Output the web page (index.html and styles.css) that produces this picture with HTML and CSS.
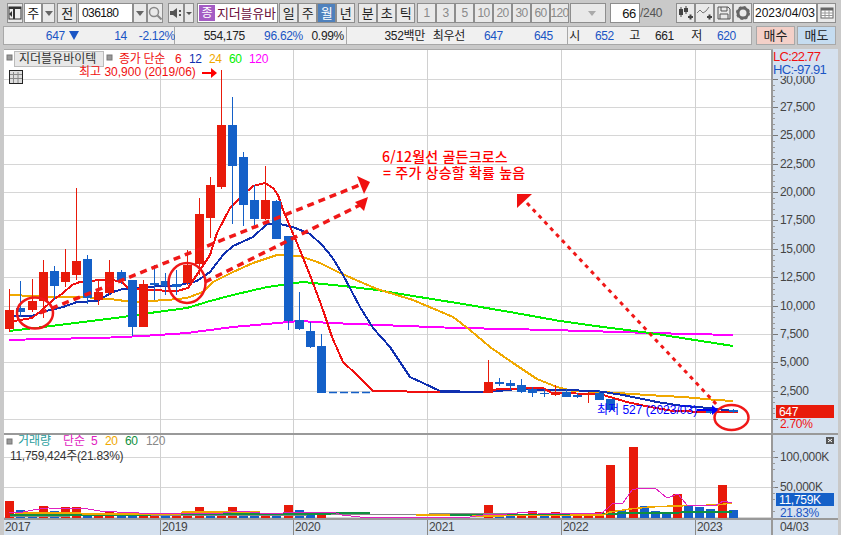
FILE: index.html
```html
<!DOCTYPE html>
<html lang="ko">

<head>
    <meta charset="UTF-8">
    <title>지더블유바이텍 월봉</title>
    <link rel="stylesheet" href="styles.css">
</head>

<body>
    <div class="toolbar">
        <div class="btn w16 m1">
            <svg width="14" height="14" viewBox="0 0 14 14"><rect x="1" y="1" width="12" height="12" fill="#eee" stroke="#333"/><rect x="1" y="1" width="12" height="2" fill="#333"/><rect x="5" y="3" width="2" height="10" fill="#333"/><path d="M1 8l3-3v6z" fill="#333"/></svg>
        </div>
        <div class="field w18 center">주</div>
        <div class="btn w13 m2"><i class="arrow"></i></div>
        <div class="btn w20 m1">전</div>
        <div class="field w55 left code">036180</div>
        <div class="btn w14"><i class="arrow"></i></div>
        <div class="btn w16 m5">
            <svg width="14" height="14" viewBox="0 0 14 14"><circle cx="6" cy="6" r="4.500" fill="none" stroke="#888" stroke-width="1.500"/><path d="M9.500 9.500l4 4" stroke="#888" stroke-width="2"/></svg>
        </div>
        <div class="btn w16">
            <svg width="14" height="14" viewBox="0 0 14 14"><path d="M1 5h3l4-3v10l-4-3H1z" fill="#555"/><rect x="10" y="4" width="2" height="2" fill="#555"/><rect x="10" y="8" width="2" height="2" fill="#555"/></svg>
        </div>
        <div class="btn w10 m3"><i class="arrow small"></i></div>
        <div class="name w81 m1">
            <span class="name-tag">종</span><span class="name-text">지더블유바</span>
        </div>
        <div class="btn w19">일</div>
        <div class="btn w19">주</div>
        <div class="btn w19 on">월</div>
        <div class="btn w19 m3">년</div>
        <div class="btn w19">분</div>
        <div class="btn w19">초</div>
        <div class="btn w19 m2">틱</div>
        <div class="btn w19 off">1</div>
        <div class="btn w19 off">3</div>
        <div class="btn w19 off">5</div>
        <div class="btn w19 off">10</div>
        <div class="btn w19 off">20</div>
        <div class="btn w19 off">30</div>
        <div class="btn w19 off">60</div>
        <div class="btn w19 off m1">120</div>
        <div class="btn w36 m4 end"><i class="arrow pale"></i></div>
        <div class="field w30 right">66</div>
        <div class="count m10">/240</div>
        <div class="btn w19">
            <svg width="16" height="14" viewBox="0 0 16 14"><path d="M3 1v10M8 0v8" stroke="#444"/><rect x="1" y="3" width="4" height="6" fill="#444"/><rect x="6" y="2" width="4" height="4" fill="#444"/><path d="M10 11h5M12.500 8.500v5" stroke="#444" stroke-width="2"/></svg>
        </div>
        <div class="btn w19">
            <svg width="16" height="14" viewBox="0 0 16 14"><path d="M0 7l3-3 3 3 3-2 3-4" fill="none" stroke="#777"/><path d="M10 11h5M12.500 8.500v5" stroke="#444" stroke-width="2"/></svg>
        </div>
        <div class="btn w19">
            <svg width="14" height="14" viewBox="0 0 14 14"><path d="M1 1h10l2 2v10H1z" fill="#e8e8e8" stroke="#555"/><path d="M4 1v4h6V1M3 13V8h8v5" fill="none" stroke="#555"/></svg>
        </div>
        <div class="btn w19 m1">
            <svg width="14" height="14" viewBox="0 0 14 14"><circle cx="7" cy="7" r="5" fill="none" stroke="#666" stroke-width="3"/><circle cx="7" cy="7" r="6" fill="none" stroke="#666" stroke-width="2" stroke-dasharray="2.400 2.300"/></svg>
        </div>
        <div class="field w64 center date">2023/04/03</div>
        <div class="btn w19">
            <svg width="14" height="12" viewBox="0 0 14 12"><rect x="1" y="1" width="12" height="10" fill="#fff" stroke="#666"/><rect x="1" y="1" width="12" height="2.500" fill="#666"/><path d="M5 3v8M9 3v8M1 6h12M1 8.500h12" stroke="#999"/></svg>
        </div>
    </div>

    <div class="quotebar">
        <div class="quote s172">
            <span class="q w75 blue">647 <i class="down"></i></span>
            <span class="q w48 blue">14</span>
            <span class="q w48 blue">-2.12%</span>
        </div>
        <div class="quote s172">
            <span class="q w70">554,175</span>
            <span class="q w58 blue">96.62%</span>
            <span class="q w41">0.99%</span>
        </div>
        <div class="quote s221">
            <span class="q w78">352백만</span>
            <span class="q w40">최우선</span>
            <span class="q w38 blue">647</span>
            <span class="q w50 blue">645</span>
        </div>
        <div class="quote s184">
            <span class="q w12">시</span>
            <span class="q w34 blue">652</span>
            <span class="q w26">고</span>
            <span class="q w34">661</span>
            <span class="q w28">저</span>
            <span class="q w34 blue">620</span>
        </div>
        <div class="trade buy">매수</div>
        <div class="trade sell">매도</div>
    </div>

    <div class="chart">
        <svg id="plot" width="841" height="486" viewBox="0 49 841 486">
            <rect x="4" y="49" width="834" height="486" fill="#fff"/>
            <rect x="772" y="49" width="66" height="486" class="axis-bg"/>
            <rect x="4" y="519" width="834" height="16" class="axis-bg"/>
            <g id="grid"></g>
            <g id="volume"></g>
            <g id="lines"></g>
            <g id="candles"></g>

            <path d="M329 392.500H372" class="flat"/>

            <text x="780" y="111" class="t axis">27,500</text>
            <text x="780" y="139" class="t axis">25,000</text>
            <text x="780" y="168" class="t axis">22,500</text>
            <text x="780" y="196" class="t axis">20,000</text>
            <text x="780" y="224" class="t axis">17,500</text>
            <text x="780" y="253" class="t axis">15,000</text>
            <text x="780" y="281" class="t axis">12,500</text>
            <text x="780" y="310" class="t axis">10,000</text>
            <text x="780" y="338" class="t axis">7,500</text>
            <text x="780" y="366" class="t axis">5,000</text>
            <text x="780" y="395" class="t axis">2,500</text>
            <text x="780" y="84" class="t axis">30,000</text>
            <rect x="773" y="49" width="65" height="27" class="axis-bg"/>
            <text x="773" y="61" class="t hl red">LC:22.77</text>
            <text x="773" y="74" class="t hl blue">HC:-97.91</text>

            <rect x="776" y="405" width="58" height="13" fill="#e81a0a"/>
            <text x="779" y="415.500" class="t" fill="#fff">647</text>
            <text x="780" y="428" class="t red">2.70%</text>

            <rect x="826" y="437" width="8" height="7" fill="#555"/>
            <path d="M828 439l4 3M832 439l-4 3" stroke="#fff"/>
            <text x="780" y="461" class="t axis">100,000K</text>
            <text x="780" y="491" class="t axis">50,000K</text>
            <rect x="776" y="493" width="58" height="13" fill="#1460c8"/>
            <text x="779" y="504" class="t" fill="#fff">11,759K</text>
            <text x="780" y="517" class="t blue">21.83%</text>

            <text x="5" y="531" class="t axis">2017</text>
            <text x="162" y="531" class="t axis">2019</text>
            <text x="295" y="531" class="t axis">2020</text>
            <text x="429" y="531" class="t axis">2021</text>
            <text x="563" y="531" class="t axis">2022</text>
            <text x="697" y="531" class="t axis">2023</text>
            <text x="780" y="531" class="t axis">04/03</text>

            <rect x="7" y="55" width="5" height="5" class="sq"/>
            <rect x="14.500" y="51.500" width="89" height="15" fill="#e8e8e8" stroke="#bbb"/>
            <text x="19" y="63" class="t wide" fill="#333">지더블유바이텍</text>
            <rect x="107" y="55" width="5" height="5" class="sq"/>
            <text x="119" y="63" class="t red">종가 단순</text>
            <text x="175" y="63" class="t red">6</text>
            <text x="189" y="63" class="t" fill="#1030b0">12</text>
            <text x="209" y="63" class="t" fill="#f0a800">24</text>
            <text x="229" y="63" class="t" fill="#00f000">60</text>
            <text x="249" y="63" class="t" fill="#f0f">120</text>

            <rect x="9.500" y="70.500" width="13" height="13" fill="#ddd" stroke="#222"/>
            <path d="M13.500 72v11M18 72v11M10 74.500h12M10 78.500h12" stroke="#888"/>

            <text x="79" y="76" class="t wide red">최고 30,900 (2019/06)</text>
            <path d="M202 73h11" stroke="#f00" stroke-width="2"/>
            <path d="M211 68l6 5-6 5z" fill="#f00"/>

            <text x="382" y="162" class="note">6/12월선 골든크로스</text>
            <text x="383" y="178" class="note">= 주가 상승할 확률 높음</text>

            <path d="M40 313L362 184" class="dash"/>
            <path d="M357 176L370 182L364 194z" class="head"/>
            <path d="M205 282L360 205" class="dash"/>
            <path d="M355 202L368 197L364 211z" class="head"/>
            <path d="M527 203L717 405" class="dash thin"/>
            <path d="M517 194H532L517 208z" class="head"/>

            <ellipse cx="35" cy="313" rx="18" ry="15.500" class="ring"/>
            <ellipse cx="187" cy="283" rx="18.500" ry="20" class="ring"/>
            <ellipse cx="731.500" cy="417.500" rx="17" ry="12.500" class="ring"/>

            <text x="597" y="414" class="t wide low">최저 527 (2023/03)</text>
            <path d="M697 410h16" stroke="#00f" stroke-width="2"/>
            <path d="M712 405l6 5-6 5z" fill="#00f"/>

            <rect x="7" y="439" width="5" height="5" class="sq"/>
            <text x="18" y="445" class="t wide" fill="#2a9d9d">거래량</text>
            <text x="63" y="445" class="t wide" fill="#e020c0">단순</text>
            <text x="91" y="445" class="t" fill="#e020c0">5</text>
            <text x="105" y="445" class="t" fill="#f0a800">20</text>
            <text x="125" y="445" class="t" fill="#109040">60</text>
            <text x="146" y="445" class="t" fill="#888">120</text>
            <text x="10" y="460" class="t" fill="#333">11,759,424주(21.83%)</text>
        </svg>
    </div>

    <script src="chart.js"></script>
</body>

</html>
```

FILE: styles.css
```css
* {
    margin: 0;
    padding: 0;
    box-sizing: border-box;
}

body {
    width: 841px;
    height: 535px;
    overflow: hidden;
    background-color: #c9c9c9;
    font: 12px/1 "Liberation Sans", "Noto Sans CJK KR", sans-serif;
    letter-spacing: -0.3px;
    color: #222;
}

.toolbar {
    display: flex;
    height: 20px;
    margin: 3px 0 0 7px;
}

.btn,
.field,
.name {
    height: 20px;
    display: flex;
    align-items: center;
    justify-content: center;
    border: 1px solid #8e8e8e;
    flex: none;
}

.btn {
    background-color: #e9e9e9;
    font-size: 13px;
}

.field {
    background-color: #fff;
    color: #111;
    font-size: 13px;
}

.field.code {
    font-size: 12px;
    letter-spacing: -0.6px;
}

.field.date {
    font-size: 12px;
    letter-spacing: 0;
}

.left {
    justify-content: flex-start;
    padding-left: 3px;
}

.right {
    justify-content: flex-end;
    padding-right: 3px;
}

.end {
    justify-content: flex-end;
    padding-right: 1px;
}

.btn.on {
    background-color: #4f81bd;
    color: #fff;
}

.btn.off {
    color: #8a8a8a;
    font-size: 12px;
    letter-spacing: -0.6px;
}

.arrow {
    width: 0;
    height: 0;
    border: 4px solid transparent;
    border-top: 5px solid #666;
    border-bottom: 0;
}

.arrow.small {
    border-width: 3px 3px 0;
    border-top-color: #555;
}

.arrow.pale {
    border-top-color: #aaa;
    margin-right: 8px;
}

.name {
    justify-content: flex-start;
    background-color: #fff;
    padding-left: 1px;
    overflow: hidden;
}

.name-tag {
    width: 16px;
    height: 16px;
    line-height: 16px;
    text-align: center;
    background-color: #a45cc4;
    color: #fff;
    margin-right: 2px;
    flex: none;
    letter-spacing: 0;
}

.name-text {
    color: #6b0f3c;
    font-size: 13px;
    letter-spacing: -0.2px;
    white-space: nowrap;
}

.count {
    width: 26px;
    height: 20px;
    line-height: 20px;
    color: #555;
    font-size: 12px;
    flex: none;
}

.w10 { width: 10px; }
.w13 { width: 13px; }
.w14 { width: 14px; }
.w16 { width: 16px; }
.w18 { width: 18px; }
.w19 { width: 19px; }
.w20 { width: 20px; }
.w30 { width: 30px; }
.w36 { width: 36px; }
.w55 { width: 55px; }
.w64 { width: 64px; }
.w81 { width: 81px; }

.m1 { margin-right: 1px; }
.m2 { margin-right: 2px; }
.m3 { margin-right: 3px; }
.m4 { margin-right: 4px; }
.m5 { margin-right: 5px; }
.m10 { margin-right: 10px; }

.quotebar {
    display: flex;
    height: 19px;
    margin: 3px 0 0 3px;
}

.quote {
    height: 19px;
    display: flex;
    align-items: center;
    background-color: #f0f0f0;
    border: 1px solid #a8a8a8;
    border-left-width: 0;
    white-space: nowrap;
}

.quote:first-child {
    border-left-width: 1px;
}

.s172 { width: 172px; }
.s221 { width: 221px; }
.s184 { width: 184px; }

.q {
    display: block;
    text-align: right;
    flex: none;
}

.q.w12 { width: 12px; }
.q.w26 { width: 26px; }
.q.w28 { width: 28px; }
.q.w34 { width: 34px; }
.q.w38 { width: 38px; }
.q.w40 { width: 40px; }
.q.w41 { width: 41px; }
.q.w48 { width: 48px; }
.q.w50 { width: 50px; }
.q.w58 { width: 58px; }
.q.w70 { width: 70px; }
.q.w75 { width: 75px; }
.q.w78 { width: 78px; }

.blue {
    color: #1a55c4;
    fill: #1a55c4;
}

.red {
    fill: #f01010;
}

.down {
    display: inline-block;
    border: 5px solid transparent;
    border-top: 9px solid #1a55c4;
    border-bottom: 0;
    margin-left: 1px;
}

.trade {
    width: 39px;
    height: 19px;
    line-height: 17px;
    text-align: center;
    border: 1px solid #a8a8a8;
    font-size: 13px;
    letter-spacing: 0;
    flex: none;
}

.buy {
    background-color: #f4d0c8;
    margin: 0 2px 0 4px;
}

.sell {
    background-color: #c5dcf0;
}

.chart {
    height: 486px;
    margin-top: 4px;
}

#plot {
    display: block;
}

.axis-bg {
    fill: #d5e1ef;
}

.t {
    font: 12px "Liberation Sans", "Noto Sans CJK KR", sans-serif;
    letter-spacing: -0.3px;
}

.t.wide {
    letter-spacing: 0;
}

.axis {
    fill: #444;
}

.hl {
    font-size: 13px;
    letter-spacing: -0.7px;
}

.low {
    fill: #00f;
}

.note {
    font: 500 14px "Noto Sans CJK KR", sans-serif;
    letter-spacing: 0.2px;
    fill: #f00;
}

.sq {
    fill: #999;
    stroke: #777;
}

.flat {
    fill: none;
    stroke: #1460c8;
    stroke-width: 1.5;
    stroke-dasharray: 8 3;
}

.dash {
    fill: none;
    stroke: #f01818;
    stroke-width: 3.5;
    stroke-dasharray: 7 5;
}

.dash.thin {
    stroke-width: 3;
    stroke-dasharray: 4 4.500;
}

.head {
    fill: #f01010;
}

.ring {
    fill: none;
    stroke: #f01818;
    stroke-width: 2.5;
}
```

FILE: chart.js
```js
var NS = 'http://www.w3.org/2000/svg';
var RED = '#e81a0a';
var BLUE = '#1460c8';

// 봉 하나: 색, 시가쪽 y, 종가쪽 y, 고가 y, 저가 y (화면 좌표)
var candles = [
    ['r', 310, 329, 289, 332], ['b', 308, 312, 281, 317], ['r', 301, 310, 279, 312], ['r', 272, 301, 260, 318],
    ['b', 271, 286, 266, 300], ['r', 272, 282, 249, 287], ['r', 261, 275, 188, 280], ['b', 259, 298, 255, 304],
    ['r', 292, 300, 280, 305], ['r', 272, 293, 260, 295], ['b', 272, 281, 270, 284], ['b', 280, 327, 280, 336],
    ['r', 284, 327, 280, 327], ['b', 283, 285, 265, 300], ['b', 281, 286, 273, 295], ['b', 284, 287, 270, 295],
    ['r', 265, 283, 250, 285], ['r', 214, 264, 198, 275], ['r', 185, 218, 177, 238], ['r', 125, 187, 70, 189],
    ['b', 125, 166, 97, 224], ['b', 157, 205, 152, 226], ['b', 200, 219, 185, 225], ['r', 200, 219, 166, 220],
    ['b', 201, 239, 200, 239], ['b', 236, 321, 236, 330], ['b', 320, 329, 292, 330], ['b', 331, 347, 322, 348],
    ['b', 346, 393, 334, 393]
];
// 거래정지 구간은 건너뛰고 2021년 이후 봉
var candlesLate = [
    [43, 'r', 382, 393, 360, 393], [44, 'b', 382, 384, 378, 386], [45, 'b', 383, 386, 380, 390], [46, 'b', 385, 392, 379, 393],
    [47, 'b', 389, 393, 387, 397], [48, 'b', 393, 394, 389, 397], [49, 'r', 393, 395, 385, 396], [50, 'b', 392, 397, 389, 397],
    [51, 'b', 395, 397, 393, 398], [52, 'r', 393, 395, 392, 403], [53, 'b', 393, 400, 390, 400], [54, 'b', 399, 410, 399, 410],
    [63, 'b', 411, 413, 409, 414], [65, 'b', 410, 412, 409, 413]
];

// 거래량 막대 top y, 0~28 / 43~65
var volumes = {
    0: ['r', 501], 1: ['b', 510], 2: ['b', 512], 3: ['r', 506], 4: ['b', 511], 5: ['r', 507], 6: ['r', 507], 7: ['b', 514],
    8: ['r', 514], 9: ['r', 512], 10: ['b', 514], 11: ['b', 516], 12: ['r', 516], 13: ['r', 516], 14: ['b', 516], 15: ['r', 516],
    16: ['r', 512], 17: ['r', 507], 18: ['b', 514], 19: ['r', 514], 20: ['r', 507], 21: ['b', 516], 22: ['b', 516], 23: ['r', 514],
    24: ['b', 516], 25: ['r', 505], 26: ['b', 510], 27: ['b', 514], 28: ['r', 514],
    43: ['r', 505], 44: ['b', 513], 45: ['b', 514], 46: ['r', 514], 47: ['r', 511], 48: ['b', 514], 49: ['r', 512], 50: ['b', 514],
    51: ['r', 514], 52: ['r', 513], 53: ['r', 512], 54: ['r', 465], 55: ['b', 510], 56: ['r', 447], 57: ['b', 506], 58: ['b', 511],
    59: ['b', 513], 60: ['r', 494], 61: ['b', 506], 62: ['b', 507], 63: ['b', 509], 64: ['r', 485], 65: ['b', 510]
};

var priceLines = [
    ['#f0f', 2, '9,340 43,339 100,338 143,336 187,333 233,327 300,321 330,323 380,325 457,328 510,329 587,331 650,333 733,335'],
    ['#00f000', 2, '9,331 43,327 83,322 123,317 157,312 187,308 210,301 233,295 267,287 303,282 343,286 377,290 413,296 457,303 510,312 560,321 603,327 650,333 733,346'],
    ['#f0a800', 2, '9,295 60,297 83,297 110,299 133,302 167,300 187,298 203,292 213,282 233,272 253,263 277,255 300,256 320,263 340,273 363,283 377,289 413,300 453,317 470,330 490,347 513,363 537,379 557,387 573,391 603,392 647,395 683,397 717,400 733,401'],
    ['#1030b0', 2, '14,316 32,316 42,312 63,307 77,302 97,301 113,292 123,289 147,287 180,285 197,281 210,272 223,255 233,246 253,237 267,224 280,224 293,227 310,234 322,245 332,257 343,275 360,307 373,328 390,347 410,377 423,383 440,391 480,392 499,391 517,389 540,390 560,390 597,391 623,395 657,402 683,406 710,408 733,411'],
    ['#f01010', 2, '14,321 32,318 42,310 53,300 63,293 72,285 80,282 100,280 113,280 122,282 128,288 147,290 177,291 188,288 200,270 210,255 217,233 230,208 240,198 253,186 265,183 273,188 278,195 283,210 297,243 310,275 323,310 332,337 343,362 357,375 373,391 440,392 483,392 499,389 543,388 552,393 600,394 610,397 627,402 650,407 673,411 710,412 738,412'],
    ['#1030b0', 2, '440,392 483,392']
];

var volumeLines = [
    ['#888', 1.5, '10,516 490,514 600,515'],
    ['#109040', 2, '10,515 293,514 370,513 M450,515 490,515 607,514 630,513 732,512'],
    ['#f0a800', 1.5, '15,513 80,513 83,514 180,514 183,512 260,512 M416,515 450,515 M472,516 603,515 610,512 630,509 650,507 673,506 717,505 732,503'],
    ['#e020c0', 1, '9,513 23,512 33,510 48,508 88,509 100,511 117,512 160,514 183,513 223,513 240,511 260,513 283,513 293,512 333,512 342,515 360,517 470,517 483,515 507,514 527,512 537,513 600,514 607,509 612,504 623,503 632,490 640,488 655,488 667,498 678,494 687,505 715,506 723,501 732,503']
];

function el(parent, name, attrs) {
    var node = document.createElementNS(NS, name);
    for (var key in attrs) {
        node.setAttribute(key, attrs[key]);
    }
    parent.appendChild(node);
    return node;
}

function slotX(i) {
    return Math.round(9.3 + 11.13 * i);
}

function drawCandle(group, i, c, y1, y2, hi, lo) {
    var color = c === 'r' ? RED : BLUE;
    var x = slotX(i);
    el(group, 'rect', { x: x, y: hi, width: 1, height: lo - hi, fill: color });
    el(group, 'rect', { x: x - 4, y: y1, width: 9, height: y2 - y1, fill: color });
}

function hline(group, y, x1, x2, color) {
    el(group, 'rect', { x: x1, y: y, width: x2 - x1, height: 1, fill: color });
}

function vline(group, x, y1, y2, color) {
    el(group, 'rect', { x: x, y: y1, width: 1, height: y2 - y1, fill: color });
}

// 격자, 눈금
var grid = document.getElementById('grid');
var rows = [79, 107, 135, 164, 192, 220, 249, 277, 306, 334, 362, 391, 419];
var cols = [160, 293, 427, 561, 695];
var i, j;

for (i = 0; i < rows.length; i++) {
    hline(grid, rows[i], 4, 771, '#d6d6d6');
    hline(grid, rows[i], 771, 778, '#777');
    if (i < rows.length - 1) {
        for (j = 1; j < 5; j++) {
            hline(grid, Math.round(rows[i] + (rows[i + 1] - rows[i]) * j / 5), 771, 775, '#999');
        }
    }
}
hline(grid, 457, 4, 771, '#d6d6d6');
hline(grid, 487, 4, 771, '#d6d6d6');
hline(grid, 517, 4, 771, '#d6d6d6');
hline(grid, 457, 771, 778, '#777');
hline(grid, 487, 771, 778, '#777');
for (i = 1; i < 12; i++) {
    if (i % 5 !== 2) {
        hline(grid, 517 - i * 6, 771, 775, '#999');
    }
}
for (i = 0; i < cols.length; i++) {
    vline(grid, cols[i], 49, 518, '#d0d0d0');
    vline(grid, cols[i], 519, 535, '#888');
}
vline(grid, 771, 49, 535, '#999');
vline(grid, 772, 49, 535, '#999');
hline(grid, 433, 4, 838, '#999');
hline(grid, 434, 4, 838, '#999');
hline(grid, 518, 4, 838, '#999');
hline(grid, 519, 4, 838, '#999');
hline(grid, 49, 4, 838, '#aaa');

// 거래량
var volume = document.getElementById('volume');
for (var k in volumes) {
    el(volume, 'rect', {
        x: slotX(+k) - 4,
        y: volumes[k][1],
        width: 9,
        height: 518 - volumes[k][1],
        fill: volumes[k][0] === 'r' ? RED : BLUE
    });
}

function drawLines(group, list) {
    for (var n = 0; n < list.length; n++) {
        var parts = list[n][2].split(' M');
        for (var p = 0; p < parts.length; p++) {
            el(group, 'polyline', {
                points: parts[p],
                fill: 'none',
                stroke: list[n][0],
                'stroke-width': list[n][1],
                'shape-rendering': 'crispEdges'
            });
        }
    }
}

drawLines(volume, volumeLines);
drawLines(document.getElementById('lines'), priceLines);

// 가격 봉
var group = document.getElementById('candles');
for (i = 0; i < candles.length; i++) {
    drawCandle(group, i, candles[i][0], candles[i][1], candles[i][2], candles[i][3], candles[i][4]);
}
for (i = 0; i < candlesLate.length; i++) {
    var c = candlesLate[i];
    drawCandle(group, c[0], c[1], c[2], c[3], c[4], c[5]);
}
```
